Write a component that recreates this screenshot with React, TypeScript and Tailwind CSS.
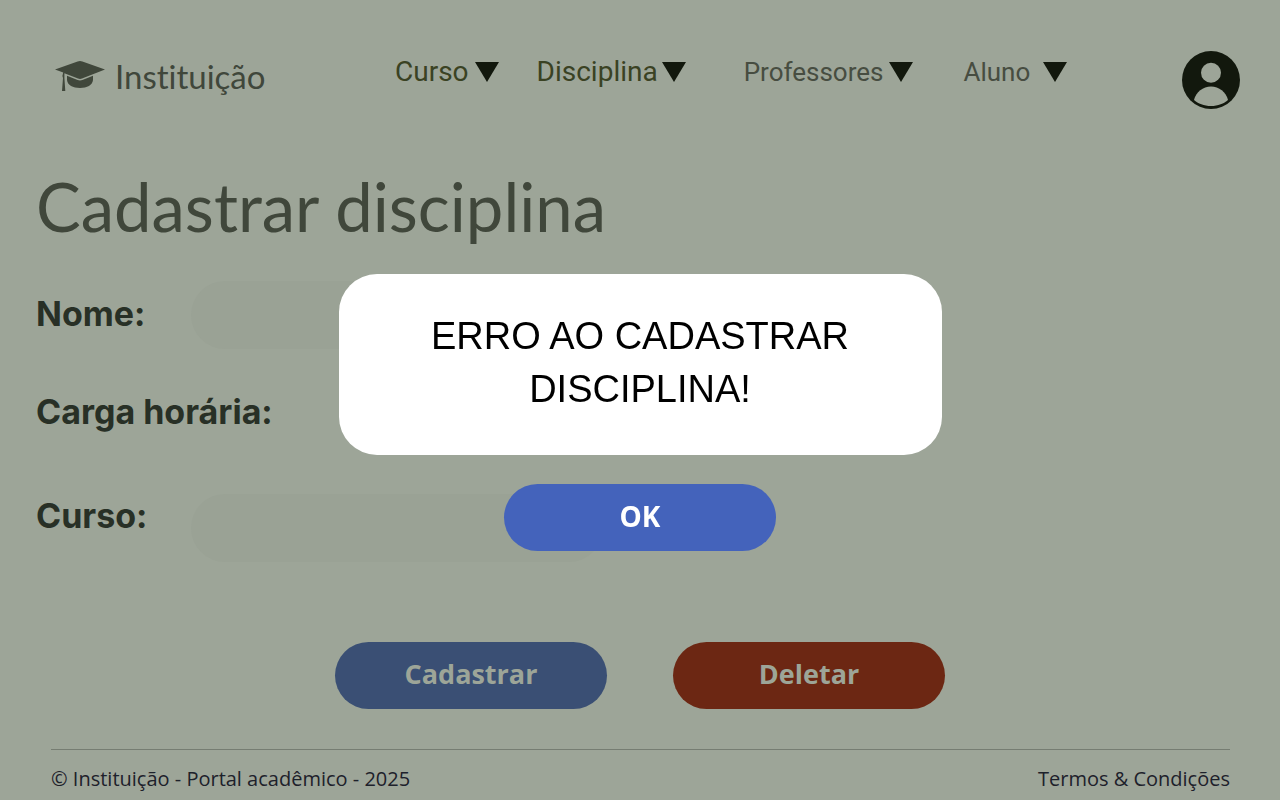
import React, { useState } from "react";

function Caret() {
  return (
    <svg viewBox="0 0 24 20" className="h-5 w-6 shrink-0" fill="#12180d" aria-hidden="true">
      <path d="M0 0H24L12 20Z" />
    </svg>
  );
}

function CapIcon() {
  return (
    <svg viewBox="0 0 50 32" className="h-8 w-[50px] shrink-0" fill="#40473b" aria-hidden="true">
      <path d="M22.6 1.5Q25 0.6 27.4 1.5L50 9.5L27 18.5Q25 19.3 23 18.5L9.4 13.2V18L10.3 31H7L8 18L7.4 16L8.2 12.6L0 9.5Z" />
      <path d="M12 15.8L22.6 20Q25 20.9 27.4 20L38 15.8V20C37.5 25.2 32 28 25 28S12.5 25.2 12 20Z" />
    </svg>
  );
}

function AvatarIcon() {
  return (
    <svg viewBox="0 0 58 58" className="size-[58px]" aria-hidden="true">
      <circle cx="29" cy="29" r="29" fill="#12180d" />
      <circle cx="29" cy="21.7" r="10" fill="#9da598" />
      <path d="M12 49C14 41 21 35.5 29 35.5S44 41 46 49C42 52.6 36 55 29 55S16 52.6 12 49Z" fill="#9da598" />
    </svg>
  );
}

const navItems = [
  { name: "Curso", style: "gap-[6px] text-[28px] text-[#3a4223]" },
  { name: "Disciplina", style: "ml-[38px] gap-1 text-[28px] text-[#3a4223]" },
  { name: "Professores", style: "ml-[58px] gap-[6px] text-[26px] text-[#474d41]" },
  { name: "Aluno", style: "ml-[50px] gap-[13px] text-[26px] text-[#474d41]" },
];

const labelStyle = "shrink-0 font-['Inter',sans-serif] text-[34px] leading-[66px] font-bold text-[#283026]";
const fieldStyle = "h-[68px] min-w-0 rounded-full bg-[#9aa295] px-8 text-2xl text-[#283026] outline-none";
const buttonStyle = "h-[67px] w-[272px] rounded-full pb-[3px] font-['Open_Sans',sans-serif] font-bold";

export default function App() {
  const [open, setOpen] = useState(true);
  return (
    <div className="flex min-h-screen flex-col bg-[#9da598]">
      <header className="flex items-start pt-[51px] pr-10 pl-[55px]">
        <a href="#" className="flex w-[340px] items-center gap-[10px] pt-[5px] font-['Lato',sans-serif] text-[33px] leading-10 text-[#40473b] [font-variant-ligatures:none]">
          <CapIcon />
          Instituição
        </a>
        <nav className="flex pt-[2px] font-['Roboto',sans-serif] leading-[38px]">
          {navItems.map((item) => (
            <button key={item.name} type="button" className={`flex items-center ${item.style}`}>
              {item.name}
              <Caret />
            </button>
          ))}
        </nav>
        <button type="button" aria-label="Perfil" className="ml-auto">
          <AvatarIcon />
        </button>
      </header>

      <main className="px-9 pt-[58px]">
        <h1 className="font-['Lato',sans-serif] text-[67px] leading-[78px] text-[#40473b]">Cadastrar disciplina</h1>
        <form className="pt-9" onSubmit={(e) => e.preventDefault()}>
          <div className="flex">
            <label htmlFor="nome" className={`w-[155px] ${labelStyle}`}>Nome:</label>
            <input id="nome" className={`w-[412px] ${fieldStyle}`} />
          </div>
          <div className="flex pt-[30px]">
            <label htmlFor="carga" className={`w-[320px] ${labelStyle}`}>Carga horária:</label>
            <input id="carga" className={`w-[247px] ${fieldStyle}`} />
          </div>
          <div className="flex items-end pt-9">
            <label htmlFor="curso" className={`w-[155px] self-start ${labelStyle}`}>Curso:</label>
            <input id="curso" className={`mt-[11px] w-[412px] ${fieldStyle}`} />
          </div>
          <div className="flex justify-center gap-[66px] pt-20">
            <button type="submit" className={`bg-[#3a4f74] text-[27px] text-[#9da598] ${buttonStyle}`}>Cadastrar</button>
            <button type="button" className={`bg-[#6c2713] text-[27px] text-[#9da598] ${buttonStyle}`}>Deletar</button>
          </div>
        </form>
      </main>

      <footer className="mt-auto pr-[50px] pl-[51px] font-['Open_Sans',sans-serif] text-[20px] leading-[30px] text-[#1d212b]">
        <div className="flex justify-between border-t border-[#767d72] pt-[14px] pb-[6px]">
          <p>© Instituição - Portal acadêmico - 2025</p>
          <a href="#">Termos &amp; Condições</a>
        </div>
      </footer>

      {open && (
        <div role="alertdialog" aria-modal="true" aria-labelledby="aviso" className="fixed inset-0 flex flex-col items-center gap-[29px] pt-[274px]">
          <div className="flex h-[181px] w-[603px] items-center justify-center rounded-[38px] bg-white px-16 pb-1">
            <p id="aviso" className="text-center font-['Liberation_Sans',sans-serif] text-[38px] leading-[53px] text-black">
              ERRO AO CADASTRAR DISCIPLINA!
            </p>
          </div>
          <button type="button" onClick={() => setOpen(false)} className={`bg-[#4463bb] text-[28px] text-white ${buttonStyle}`}>OK</button>
        </div>
      )}
    </div>
  );
}
